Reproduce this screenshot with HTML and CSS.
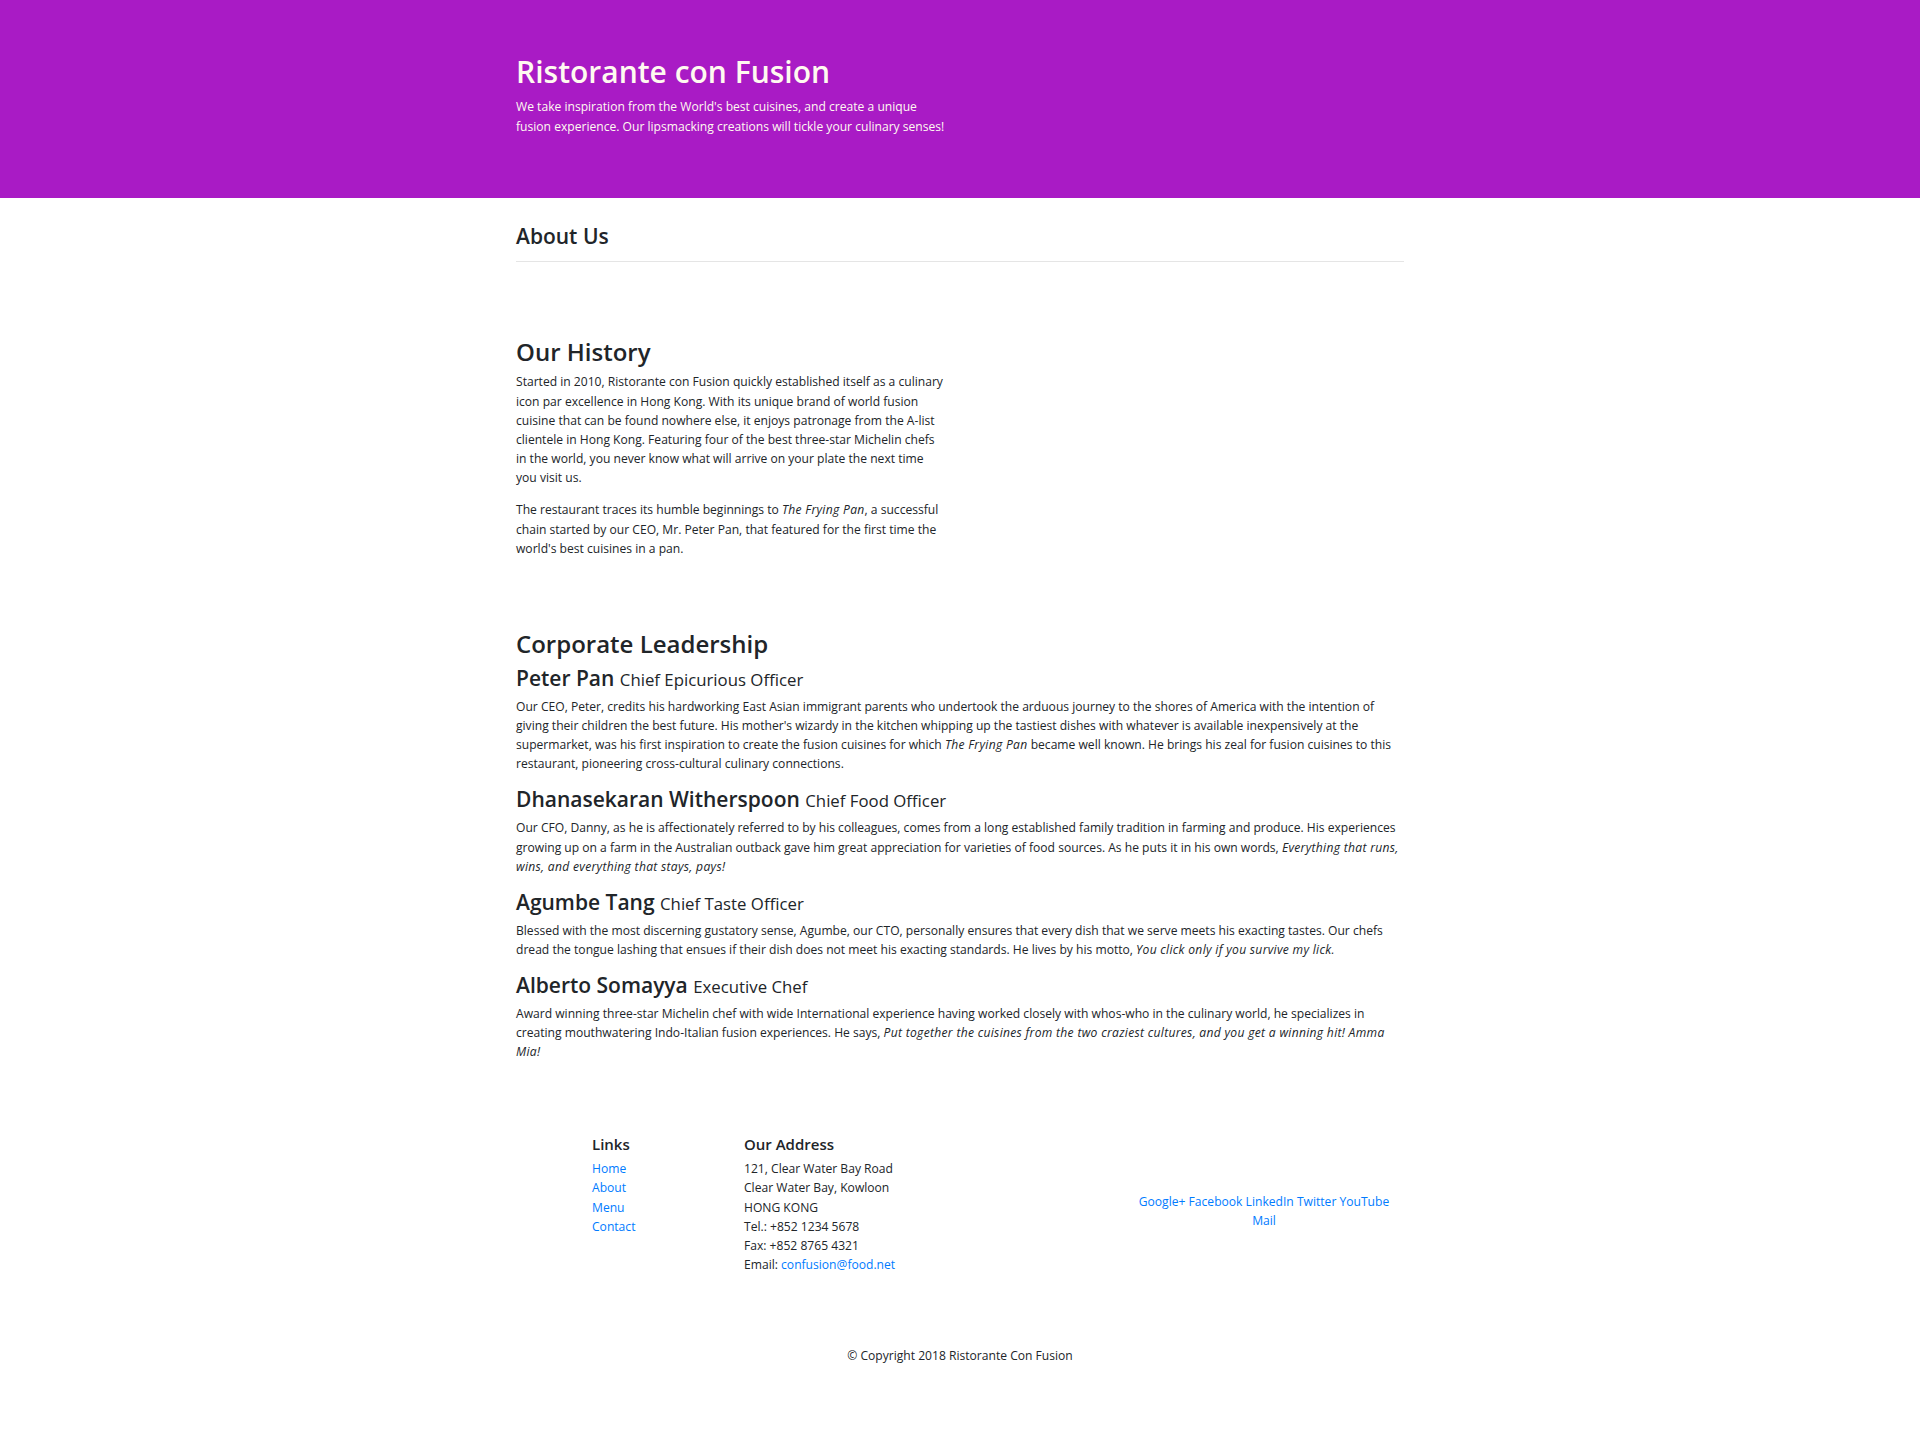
FILE: index.html
```html
<!DOCTYPE html>
<html lang="en">
<head>
<meta charset="utf-8">
<title>About Us - Ristorante con Fusion</title>
<link rel="stylesheet" href="styles.css">
</head>
<body>
<header class="jumbotron">
  <div class="container">
    <div class="intro">
      <h1>Ristorante con Fusion</h1>
      <p>We take inspiration from the World's best cuisines, and create a unique fusion experience. Our lipsmacking creations will tickle your culinary senses!</p>
    </div>
  </div>
</header>

<main class="container">
  <div class="page-title">
    <h3>About Us</h3>
    <hr>
  </div>

  <section class="history">
    <div class="half">
      <h2>Our History</h2>
      <p>Started in 2010, Ristorante con Fusion quickly established itself as a culinary icon par excellence in Hong Kong. With its unique brand of world fusion cuisine that can be found nowhere else, it enjoys patronage from the A-list clientele in Hong Kong. Featuring four of the best three-star Michelin chefs in the world, you never know what will arrive on your plate the next time you visit us.</p>
      <p>The restaurant traces its humble beginnings to <em>The Frying Pan</em>, a successful chain started by our CEO, Mr. Peter Pan, that featured for the first time the world's best cuisines in a pan.</p>
    </div>
  </section>

  <section class="leadership">
    <h2>Corporate Leadership</h2>
    <ul class="leaders">
      <li>
        <h3>Peter Pan <small>Chief Epicurious Officer</small></h3>
        <p>Our CEO, Peter, credits his hardworking East Asian immigrant parents who undertook the arduous journey to the shores of America with the intention of giving their children the best future. His mother's wizardy in the kitchen whipping up the tastiest dishes with whatever is available inexpensively at the supermarket, was his first inspiration to create the fusion cuisines for which <em>The Frying Pan</em> became well known. He brings his zeal for fusion cuisines to this restaurant, pioneering cross-cultural culinary connections.</p>
      </li>
      <li>
        <h3>Dhanasekaran Witherspoon <small>Chief Food Officer</small></h3>
        <p>Our CFO, Danny, as he is affectionately referred to by his colleagues, comes from a long established family tradition in farming and produce. His experiences growing up on a farm in the Australian outback gave him great appreciation for varieties of food sources. As he puts it in his own words, <em>Everything that runs, wins, and everything that stays, pays!</em></p>
      </li>
      <li>
        <h3>Agumbe Tang <small>Chief Taste Officer</small></h3>
        <p>Blessed with the most discerning gustatory sense, Agumbe, our CTO, personally ensures that every dish that we serve meets his exacting tastes. Our chefs dread the tongue lashing that ensues if their dish does not meet his exacting standards. He lives by his motto, <em>You click only if you survive my lick.</em></p>
      </li>
      <li>
        <h3>Alberto Somayya <small>Executive Chef</small></h3>
        <p>Award winning three-star Michelin chef with wide International experience having worked closely with whos-who in the culinary world, he specializes in creating mouthwatering Indo-Italian fusion experiences. He says, <em>Put together the cuisines from the two craziest cultures, and you get a winning hit! Amma Mia!</em></p>
      </li>
    </ul>
  </section>
</main>

<footer class="footer">
  <div class="container">
    <div class="footer-row">
      <div class="footer-links">
        <h5>Links</h5>
        <ul>
          <li><a href="#">Home</a></li>
          <li><a href="#">About</a></li>
          <li><a href="#">Menu</a></li>
          <li><a href="#">Contact</a></li>
        </ul>
      </div>
      <div class="footer-address">
        <h5>Our Address</h5>
        <address>121, Clear Water Bay Road<br>Clear Water Bay, Kowloon<br>HONG KONG<br>Tel.: +852 1234 5678<br>Fax: +852 8765 4321<br>Email: <a href="mailto:confusion@food.net">confusion@food.net</a></address>
      </div>
      <div class="footer-social">
        <div class="social">
          <a href="#">Google+</a> <a href="#">Facebook</a> <a href="#">LinkedIn</a> <a href="#">Twitter</a> <a href="#">YouTube</a> <a href="#">Mail</a>
        </div>
      </div>
    </div>
    <p class="copyright">© Copyright 2018 Ristorante Con Fusion</p>
  </div>
</footer>
</body>
</html>
```

FILE: styles.css
```css
* {
  box-sizing: border-box;
}

html,
body {
  margin: 0;
}

body {
  font-family: "Open Sans", "Noto Sans", sans-serif;
  font-size: 12.1px;
  line-height: 19.2px;
  color: #212529;
  background: #fff;
}

.container {
  width: 912px;
  margin: 0 auto;
  padding: 0 12px;
}

h1,
h2,
h3,
h5 {
  margin: 0;
  font-weight: 600;
}

p {
  margin: 0 0 12.8px;
}

em {
  letter-spacing: 0.3px;
}

a {
  color: #007bff;
  text-decoration: none;
}

/* Jumbotron */
.jumbotron {
  background: #a91bc5;
  color: floralwhite;
  padding: 53px 0 49px;
  margin-bottom: 25.6px;
}

.intro {
  width: 432px;
}

.jumbotron h1 {
  font-size: 30px;
  line-height: 38.4px;
  margin-bottom: 6px;
}

/* Page title */
.page-title h3 {
  font-size: 21px;
  line-height: 26.88px;
}

.page-title hr {
  margin: 10.5px 0 0;
  border: 0;
  border-top: 1px solid rgba(0, 0, 0, 0.1);
}

/* Sections */
.history {
  padding-top: 75px;
}

.half {
  width: 430px;
}

.leadership {
  padding-top: 58.5px;
}

.history h2,
.leadership h2 {
  font-size: 24px;
  line-height: 30.72px;
  margin-bottom: 5px;
}

.leaders {
  list-style: none;
  margin: 0;
  padding: 0;
}

.leaders h3 {
  font-size: 21px;
  line-height: 1.28;
  margin-bottom: 5px;
}

.leaders h3 small {
  font-size: 80%;
  font-weight: 400;
}

/* Footer */
.footer {
  padding: 61px 0 16px;
}

.footer-row {
  display: flex;
  margin: 0 -12px;
}

.footer-links,
.footer-address,
.footer-social {
  padding: 0 12px;
}

.footer-links {
  width: 152px;
  margin-left: 76px;
}

.footer-address {
  width: 380px;
}

.footer-social {
  width: 304px;
  align-self: center;
}

.footer h5 {
  font-size: 15px;
  line-height: 19.2px;
  margin-bottom: 5px;
}

.footer ul {
  list-style: none;
  margin: 0;
  padding: 0;
}

.footer address {
  font-style: normal;
  margin: 0 0 12.8px;
}

.social {
  text-align: center;
  padding: 0 10px;
}

.copyright {
  margin: 59px 0 12.8px;
  text-align: center;
}
```
